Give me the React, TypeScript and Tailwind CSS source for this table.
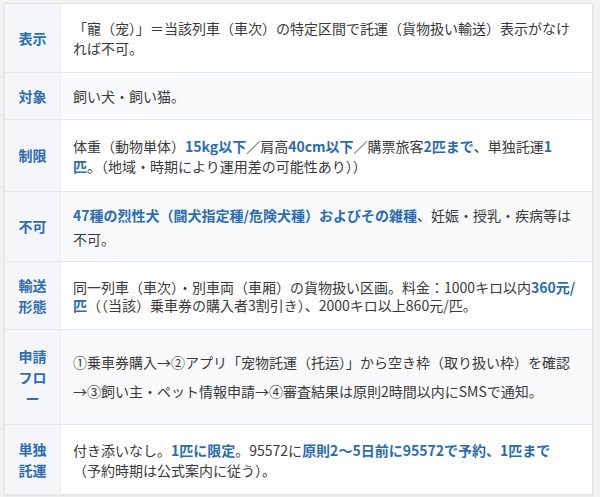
import type { ReactNode } from 'react';

const font = { fontFamily: '"Noto Sans CJK JP", "Noto Sans", sans-serif' };

function B({ children }: { children: ReactNode }) {
  return <span className="font-bold text-[#2a6db3]">{children}</span>;
}

interface Row {
  label: string[];
  body: ReactNode;
  rowClass: string;
  lead: string;
}

const rows: Row[] = [
  {
    label: ['表示'],
    rowClass: 'min-h-[69px]',
    lead: 'leading-[20px]',
    body: (
      <>
        「寵（宠）」＝当該列車（車次）の特定区間で託運（貨物扱い輸送）表示がなければ不可。
      </>
    ),
  },
  {
    label: ['対象'],
    rowClass: 'min-h-[47px]',
    lead: 'leading-[20px]',
    body: <>飼い犬・飼い猫。</>,
  },
  {
    label: ['制限'],
    rowClass: 'min-h-[72px]',
    lead: 'leading-[20px]',
    body: (
      <>
        体重（動物単体）<B>15kg以下</B>／肩高<B>40cm以下</B>／購票旅客<B>2匹まで</B>、単独託運<B>1匹</B>。（地域・時期により運用差の可能性あり））
      </>
    ),
  },
  {
    label: ['不可'],
    rowClass: 'min-h-[70px]',
    lead: 'leading-[24px]',
    body: (
      <>
        <B>47種の烈性犬（闘犬指定種/危険犬種）およびその雑種</B>、妊娠・授乳・疾病等は不可。
      </>
    ),
  },
  {
    label: ['輸送', '形態'],
    rowClass: 'min-h-[68px]',
    lead: 'leading-[18px]',
    body: (
      <>
        同一列車（車次）・別車両（車厢）の貨物扱い区画。料金：1000キロ以内<B>360元/匹</B>（（当該）乗車券の購入者3割引き）、2000キロ以上860元/匹。
      </>
    ),
  },
  {
    label: ['申請', 'フロ', 'ー'],
    rowClass: 'min-h-[95px]',
    lead: 'leading-[29px]',
    body: (
      <>
        ①乗車券購入→②アプリ「宠物託運（托运）」から空き枠（取り扱い枠）を確認→③飼い主・ペット情報申請→④審査結果は原則2時間以内にSMSで通知。
      </>
    ),
  },
  {
    label: ['単独', '託運'],
    rowClass: 'min-h-[69px]',
    lead: 'leading-[20px]',
    body: (
      <>
        付き添いなし。<B>1匹に限定</B>。95572に<B>原則2〜5日前に95572で予約、1匹まで</B>
        <br />
        （予約時期は公式案内に従う）。
      </>
    ),
  },
];

export default function App() {
  return (
    <div className="w-[600px] h-[497px] bg-[#f3f3f4] pt-[3px] pl-[4px]" style={font}>
      <div className="w-[589px] bg-white border border-[#e4e6ea] shadow-[0_1px_3px_rgba(0,0,0,0.08)] text-[14px] text-[#3a3a3a]">
        {rows.map((r, i) => (
          <div
            key={i}
            className={`grid grid-cols-[56px_1fr] ${r.rowClass} ${
              i < rows.length - 1 ? 'border-b border-[#e6e8ec]' : ''
            }`}
          >
            <div className="flex flex-col items-center justify-center bg-[#f4f6f9] border-r border-[#eceef2] font-bold text-[#2f6db1] leading-[21px]">
              {r.label.map((l) => (
                <span key={l}>{l}</span>
              ))}
            </div>
            <div
              className={`flex items-center pl-[12px] pr-[12px] py-[10px] ${r.lead} ${
                i % 2 === 1 ? 'bg-[#f9fafc]' : 'bg-white'
              }`}
            >
              <p>{r.body}</p>
            </div>
          </div>
        ))}
      </div>
    </div>
  );
}
